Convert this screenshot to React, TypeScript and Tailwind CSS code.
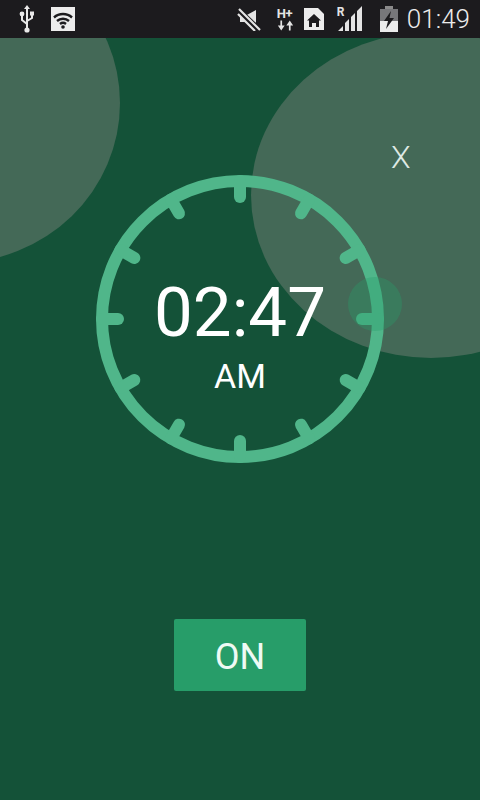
import * as React from "react";

const font = { fontFamily: "Roboto, sans-serif" };

const TICKS = [0, 30, 60, 90, 120, 150, 180, 210, 240, 270, 300, 330];

function StatusBar() {
  return (
    <div className="relative z-20 h-[38px] bg-[#1c1b1e] flex items-center text-[#e4e4e4]">
      {/* usb */}
      <svg viewBox="0 0 20 30" className="ml-[17px] w-[20px] h-[30px]" fill="none" stroke="#e8e8e8" strokeWidth="2">
        <path d="M10 3v22M10 20l-5-4v-4M10 17l5-3v-3" />
        <path d="M10 1l3 4H7z" fill="#e8e8e8" stroke="none" />
        <circle cx="5" cy="10" r="2.4" fill="#e8e8e8" stroke="none" />
        <rect x="13" y="7.5" width="4" height="4" fill="#e8e8e8" stroke="none" />
        <circle cx="10" cy="26" r="2.6" fill="#e8e8e8" stroke="none" />
      </svg>
      {/* wifi */}
      <div className="ml-[14px] w-[24px] h-[24px] bg-[#ececec] flex items-center justify-center">
        <svg viewBox="0 0 24 24" className="w-[24px] h-[24px]" fill="none" stroke="#1c1b1e" strokeWidth="2.4">
          <path d="M3 10.5c5-4.6 13-4.6 18 0M6 14c3.400-3 8.600-3 12 0M9 17c1.800-1.400 4.200-1.400 6 0" />
          <circle cx="12" cy="20" r="1.800" fill="#1c1b1e" stroke="none" />
        </svg>
      </div>
      <div className="ml-auto flex items-center">
        {/* mute */}
        <svg viewBox="0 0 24 24" className="w-[24px] h-[24px]">
          <path d="M3 9h5l11-6v18L8 15H3z" fill="#e4e4e4" />
          <path d="M1 3l21 20" stroke="#1c1b1e" strokeWidth="6" />
          <path d="M2 2l21 21M1 7l17 17" stroke="#e4e4e4" strokeWidth="2.200" />
        </svg>
        {/* H+ */}
        <div className="ml-[16px] w-[17px] h-[28px] relative">
          <span className="absolute left-0 top-[2px] text-[13px] leading-[13px] font-bold tracking-[-0.5px]" style={font}>H+</span>
          <svg viewBox="0 0 20 12" className="absolute left-0 top-[15px] w-[17px] h-[11px]" fill="#e4e4e4">
            <path d="M6 0v6h3l-4 6-4-6h3V0zM14 12V6h-3l4-6 4 6h-3v6z" />
          </svg>
        </div>
        {/* sim with home */}
        <svg viewBox="0 0 20 22" className="ml-[10px] w-[20px] h-[22px]">
          <path d="M0 0h14l6 6v16H0z" fill="#ececec" />
          <path d="M10 6l7 6.500h-2V19h-3v-4H8v4H5v-6.500H3z" fill="#1c1b1e" />
        </svg>
        {/* signal */}
        <div className="ml-[13px] w-[26px] h-[28px] relative">
          <span className="absolute left-0 top-[1px] text-[12px] leading-[12px] font-bold" style={font}>R</span>
          <svg viewBox="0 0 26 26" className="absolute left-0 top-[1px] w-[26px] h-[26px]" fill="#e4e4e4">
            <path d="M1 25l5-5v5zM8 25v-8l4-4v12zM14 25V11l4-4v18zM20 25V5l5-5v25z" />
          </svg>
        </div>
        {/* battery */}
        <svg viewBox="0 0 18 26" className="ml-[17px] w-[18px] h-[26px]">
          <path d="M5 0h8v3H5z" fill="#8a8a8a" />
          <path d="M0 3h18v23H0z" fill="#77777a" />
          <path d="M0 15h18v11H0z" fill="#ececec" />
          <path d="M11 5L4 15h4l-2 8 8-11H9.500z" fill="#1c1b1e" />
        </svg>
        <span className="ml-[9px] mr-[10px] text-[26px] leading-none font-light text-[#ececec]" style={font}>01:49</span>
      </div>
    </div>
  );
}

export default function App() {
  return (
    <div className="relative w-[480px] h-[800px] overflow-hidden bg-[#145238]" style={font}>
      <StatusBar />

      {/* background blobs */}
      <div className="absolute left-[-210px] top-[-57px] w-[330px] h-[320px] rounded-[50%] bg-[#446957]" />
      <div className="absolute left-[251px] top-[32px] w-[360px] h-[326px] rounded-[50%] bg-[#446957]" />

      <span className="absolute left-[391px] top-[138px] text-[32px] leading-[38px] font-light text-[#dfe9e4]">X</span>

      <div className="relative flex flex-col items-center pt-[137px]">
        {/* clock face */}
        <div className="relative w-[288px] h-[288px]">
          <svg viewBox="0 0 288 288" className="absolute inset-0 w-[288px] h-[288px]">
            <circle cx="144" cy="144" r="138" fill="none" stroke="#50b68a" strokeWidth="12" />
            {TICKS.map((deg) => (
              <line
                key={deg}
                x1="144"
                y1="6"
                x2="144"
                y2="22"
                stroke="#50b68a"
                strokeWidth="12"
                strokeLinecap="round"
                transform={`rotate(${deg} 144 144)`}
              />
            ))}
          </svg>
          <div className="absolute left-[252px] top-[102px] w-[54px] h-[54px] rounded-full bg-[#279d69]/35" />
          <div className="absolute inset-0 flex flex-col items-center text-white">
            <span className="mt-[98px] text-[69px] leading-[80px]">02:47</span>
            <span className="mt-[3px] text-[34px] leading-[40px]">AM</span>
          </div>
        </div>

        <button className="mt-[156px] w-[132px] h-[72px] pt-[3px] bg-[#279d69] rounded-[2px] text-[36px] leading-none text-[#eefaf4]">
          ON
        </button>
      </div>
    </div>
  );
}
